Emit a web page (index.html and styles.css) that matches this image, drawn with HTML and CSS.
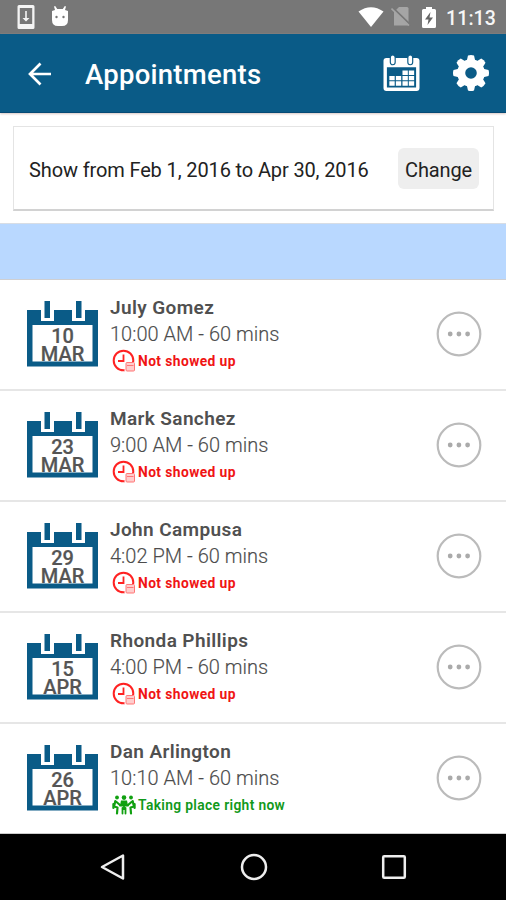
FILE: index.html
```html
<!DOCTYPE html>
<html lang="en">
<head>
<meta charset="utf-8">
<title>Appointments</title>
<link rel="stylesheet" href="styles.css">
</head>
<body>
<svg class="defs" aria-hidden="true">
  <symbol id="cal" viewBox="0 0 71 66">
    <path fill="#0a5b87" d="M0 9h71v56.500H0z"/>
    <path fill="#fff" d="M5.500 24h60v36.500h-60zM14 0h13v20H14zM45 0h13v20H45z"/>
    <path fill="#0a5b87" d="M17.500 0h5.500v17h-5.500zM49 0h5.500v17H49z"/>
  </symbol>
  <symbol id="missed" viewBox="0 0 24 24">
    <circle cx="11.500" cy="11.500" r="9.800" fill="none" stroke="#f22" stroke-width="2"/>
    <path d="M11.500 5.500v6.500H6" fill="none" stroke="#f22" stroke-width="1.800"/>
    <rect x="12.500" y="13" width="11" height="10" rx="1.500" fill="#fff"/>
    <rect x="14" y="13.500" width="8.500" height="8.500" rx="1" fill="#fcc" stroke="#f77"/>
    <path d="M15 16.500h6.500" stroke="#f77" stroke-width="1"/>
  </symbol>
  <symbol id="meeting" viewBox="0 0 24 20">
    <g fill="#11a011">
      <circle cx="5" cy="2.500" r="1.900"/><circle cx="12" cy="2.600" r="2.300"/><circle cx="19" cy="2.500" r="1.900"/>
      <path d="M9 5.500h6l1 5h-8z"/>
    </g>
    <g fill="none" stroke="#11a011" stroke-width="2.200" stroke-linejoin="round" stroke-linecap="round">
      <path d="M3.300 6l-1.200 5.500 3.400 1-.5 6M1.400 9v4M4.500 7l3.500 3"/>
      <path d="M20.700 6l1.200 5.500-3.400 1 .5 6M22.600 9v4M19.500 7l-3.500 3"/>
      <path d="M8 10.500h8M12 11v3M10.500 13v5.500M13.500 13v5.500" stroke-width="1.800"/>
    </g>
  </symbol>
  <symbol id="more" viewBox="0 0 46 46">
    <circle cx="23" cy="23" r="21.300" fill="none" stroke="#bbb" stroke-width="2.200"/>
    <g fill="#aaa"><circle cx="14.200" cy="23" r="2.400"/><circle cx="22.900" cy="23" r="2.400"/><circle cx="31.600" cy="23" r="2.400"/></g>
  </symbol>
</svg>

<header>
  <div class="status-bar">
    <svg class="i-update" viewBox="0 0 18 24"><path fill="#f4f4f4" fill-rule="evenodd" d="M2 0h14a1.500 1.500 0 0 1 1.500 1.500v21A1.500 1.500 0 0 1 16 24H2a1.500 1.500 0 0 1-1.500-1.500v-21A1.500 1.500 0 0 1 2 0zM2.800 3v16h12.400V3z"/><path fill="#f4f4f4" d="M8.200 6h1.600v7h2.700L9 16.500 5.500 13h2.700z"/></svg>
    <svg class="i-droid" viewBox="0 0 18 20"><path fill="#fff" d="M1 5l3-1L3 .5 4.200 0l2 3h5.600l2-3 1.200.5L14 4l3 1v9q0 6-6 6H7q-6 0-6-6z"/><circle cx="5.500" cy="11" r="1.200" fill="#777"/><circle cx="12.500" cy="11" r="1.200" fill="#777"/></svg>
    <span class="spacer"></span>
    <svg class="i-wifi" viewBox="0 0 26 20"><path fill="#fff" d="M13 20L.5 4.500Q13-4 25.500 4.500z"/></svg>
    <svg class="i-sim" viewBox="0 0 20 20"><path fill="#a5a5a5" d="M8 0h8q1.500 0 1.500 1.500v17H3V5z"/><path d="M1.500 .5l18 17.500" stroke="#777" stroke-width="2"/><path d="M.5 1.500l17.500 17" stroke="#a5a5a5" stroke-width="1.600"/></svg>
    <svg class="i-battery" viewBox="0 0 14 21"><path fill="#fff" d="M4 0h6v2h2.500q1.500 0 1.500 1.500v16q0 1.500-1.500 1.500h-11Q0 21 0 19.500v-16Q0 2 1.500 2H4z"/><path fill="#666" d="M8.500 5L3 12.500h3.500L5.500 18l5.500-7.500H7.500z"/></svg>
    <span class="clock">11:13</span>
  </div>
  <div class="app-bar">
    <svg class="i-back" viewBox="0 0 24 24"><path d="M23 12H2M12.500 1.500L2 12l10.500 10.500" fill="none" stroke="#fff" stroke-width="2.700"/></svg>
    <h1>Appointments</h1>
    <span class="spacer"></span>
    <svg class="i-month" viewBox="0 0 37 37">
      <path fill="#fff" fill-rule="evenodd" d="M3 3h31a3 3 0 0 1 3 3v28a3 3 0 0 1-3 3H3a3 3 0 0 1-3-3V6a3 3 0 0 1 3-3zM3.500 12.500V33.500h30v-21z"/>
      <g fill="#fff" stroke="#0a5b87" stroke-width="1.200"><rect x="7" y="0" width="5" height="10" rx="2.500"/><rect x="25" y="0" width="5" height="10" rx="2.500"/></g>
      <path fill="#fff" d="M19.500 16h5.500v4.500h-5.500zM26 16h5.500v4.500h-5.500zM6 21.500h5.500v4.500H6zM12.700 21.500h5.500v4.500h-5.500zM19.500 21.500h5.500v4.500h-5.500zM26 21.500h5.500v4.500h-5.500zM6 27h5.500v4.500H6zM12.700 27h5.500v4.500h-5.500zM19.500 27h5.500v4.500h-5.500zM26 27h5.500v4.500h-5.500z"/>
    </svg>
    <svg class="i-gear" viewBox="-18 -18 36 36">
      <defs><path id="tooth" d="M-4.500-11L-3-17.500Q0-18.500 3-17.500L4.500-11z"/></defs>
      <g fill="#fff"><use href="#tooth"/><use href="#tooth" transform="rotate(45)"/><use href="#tooth" transform="rotate(90)"/><use href="#tooth" transform="rotate(135)"/><use href="#tooth" transform="rotate(180)"/><use href="#tooth" transform="rotate(225)"/><use href="#tooth" transform="rotate(270)"/><use href="#tooth" transform="rotate(315)"/></g>
      <circle r="9.800" fill="none" stroke="#fff" stroke-width="8"/>
    </svg>
  </div>
</header>

<main>
  <section class="range">
    <span class="range-text">Show from Feb 1, 2016 to Apr 30, 2016</span>
    <button class="change">Change</button>
  </section>
  <div class="band"></div>
  <ul class="list">
    <li class="row">
      <div class="date"><svg class="i-cal"><use href="#cal"/></svg><span class="day">10</span><span class="month">MAR</span></div>
      <div class="info"><div class="name">July Gomez</div><div class="time">10:00 AM - 60 mins</div><div class="state missed"><svg class="i-missed"><use href="#missed"/></svg><span>Not showed up</span></div></div>
      <svg class="i-more"><use href="#more"/></svg>
    </li>
    <li class="row">
      <div class="date"><svg class="i-cal"><use href="#cal"/></svg><span class="day">23</span><span class="month">MAR</span></div>
      <div class="info"><div class="name">Mark Sanchez</div><div class="time">9:00 AM - 60 mins</div><div class="state missed"><svg class="i-missed"><use href="#missed"/></svg><span>Not showed up</span></div></div>
      <svg class="i-more"><use href="#more"/></svg>
    </li>
    <li class="row">
      <div class="date"><svg class="i-cal"><use href="#cal"/></svg><span class="day">29</span><span class="month">MAR</span></div>
      <div class="info"><div class="name">John Campusa</div><div class="time">4:02 PM - 60 mins</div><div class="state missed"><svg class="i-missed"><use href="#missed"/></svg><span>Not showed up</span></div></div>
      <svg class="i-more"><use href="#more"/></svg>
    </li>
    <li class="row">
      <div class="date"><svg class="i-cal"><use href="#cal"/></svg><span class="day">15</span><span class="month">APR</span></div>
      <div class="info"><div class="name">Rhonda Phillips</div><div class="time">4:00 PM - 60 mins</div><div class="state missed"><svg class="i-missed"><use href="#missed"/></svg><span>Not showed up</span></div></div>
      <svg class="i-more"><use href="#more"/></svg>
    </li>
    <li class="row">
      <div class="date"><svg class="i-cal"><use href="#cal"/></svg><span class="day">26</span><span class="month">APR</span></div>
      <div class="info"><div class="name">Dan Arlington</div><div class="time">10:10 AM - 60 mins</div><div class="state active"><svg class="i-meeting"><use href="#meeting"/></svg><span>Taking place right now</span></div></div>
      <svg class="i-more"><use href="#more"/></svg>
    </li>
  </ul>
</main>

<nav class="nav-bar">
  <svg viewBox="0 0 28 28"><path d="M24 2.500v23L3 14z" fill="none" stroke="#eee" stroke-width="2.500" stroke-linejoin="round"/></svg>
  <svg viewBox="0 0 28 28"><circle cx="14" cy="14" r="12" fill="none" stroke="#eee" stroke-width="2.500"/></svg>
  <svg viewBox="0 0 28 28"><rect x="3.200" y="3.200" width="21.600" height="21.600" rx="1" fill="none" stroke="#eee" stroke-width="2.500"/></svg>
</nav>
</body>
</html>
```
FILE: styles.css
```css
* { box-sizing: border-box; }
body {
  margin: 0;
  width: 506px;
  height: 900px;
  overflow: hidden;
  display: flex;
  flex-direction: column;
  background: #fff;
  font-family: Roboto, "Liberation Sans", sans-serif;
}
svg { display: block; flex: none; }
.defs { position: absolute; width: 0; height: 0; }
.spacer { flex: 1; }

.status-bar {
  height: 34px;
  background: #777;
  display: flex;
  align-items: center;
  padding: 0 10px 0 17px;
}
.i-update { width: 18px; height: 24px; }
.i-droid { width: 18px; height: 20px; margin: -2px 0 0 16px; }
.i-wifi { width: 26px; height: 20px; }
.i-sim { width: 20px; height: 20px; margin-left: 7px; }
.i-battery { width: 14px; height: 21px; margin-left: 11px; }
.clock {
  color: #f6f6f6;
  font-size: 19.500px;
  font-weight: 500;
  letter-spacing: 0.1px;
  margin-left: 10px;
  line-height: 34px;
  padding-top: 3px;
}

.app-bar {
  height: 79px;
  background: #0a5b87;
  border-bottom: 1px solid #064a75;
  box-shadow: 0 1px 2px #d8c8c4;
  display: flex;
  align-items: center;
  padding: 0 17px 0 28px;
}
.i-back { width: 24px; height: 24px; margin-top: 1px; }
h1 {
  margin: 4px 0 0 33px;
  color: #fff;
  font-size: 27.500px;
  font-weight: 500;
  letter-spacing: 0.250px;
  line-height: 32px;
}
.i-month { width: 37px; height: 36px; margin-right: 33px; }
.i-gear { width: 36px; height: 36px; }

.range {
  margin: 13px 12px 12px 13px;
  height: 85px;
  border: 1px solid #e4e4e4;
  border-bottom: 2px solid #d2d2d2;
  display: flex;
  align-items: center;
  justify-content: space-between;
  padding: 0 14px 0 15px;
}
.range-text { font-size: 20px; letter-spacing: -0.130px; color: #222; white-space: nowrap; padding-top: 3px; }
.change {
  width: 81px;
  height: 41px;
  border: 0;
  border-radius: 6px;
  padding: 3px 0 0;
  background: #eee;
  color: #222;
  font: 20px Roboto, sans-serif;
  letter-spacing: -0.150px;
}
.band {
  height: 57px;
  background: #b9d8ff;
  border-top: 1px solid #d8dde4;
  border-bottom: 1px solid #cfcfd2;
}

.list { list-style: none; margin: 0; padding: 0; }
.row {
  height: 111px;
  border-bottom: 2px solid #e6e6e6;
  display: flex;
  padding: 0 24px 0 27px;
}
.row:last-child { height: 110px; border-bottom: 1px solid #ccc; }
.date {
  width: 71px;
  height: 66px;
  margin-top: 21px;
  display: grid;
  grid-template-rows: 26px 18px 18px;
  justify-items: center;
  color: #555;
  font-size: 20px;
  font-weight: 500;
  line-height: 18px;
}
.i-cal { grid-area: 1 / 1 / 4 / 2; width: 71px; height: 66px; }
.day { grid-area: 2 / 1; -webkit-text-stroke: 0.2px #555; }
.month { grid-area: 3 / 1; -webkit-text-stroke: 0.2px #555; }
.info { flex: 1; margin: 14px 0 0 12px; }
.name { font-size: 19px; font-weight: 600; letter-spacing: 0.380px; line-height: 27px; color: #505050; }
.time { font-size: 20px; font-weight: 300; letter-spacing: 0.020px; line-height: 27px; color: #4c4c4c; -webkit-text-stroke: 0.15px #4c4c4c; }
.state { display: flex; align-items: center; height: 27px; margin-top: -1px; font-size: 13.800px; font-weight: 700; letter-spacing: 0.420px; white-space: nowrap; }
.missed { color: #f01414; }
.active { color: #11991a; font-weight: 600; letter-spacing: 0.350px; }
.i-missed { width: 24px; height: 24px; margin: 0 2px; }
.i-meeting { width: 24px; height: 20px; margin: 0 2px; }
.i-more { width: 46px; height: 46px; margin-top: 31px; }

.nav-bar {
  height: 66px;
  background: #000;
  display: flex;
  align-items: center;
  justify-content: space-between;
  padding: 0 98px 0 99px;
}
.nav-bar svg { width: 28px; height: 28px; }
```
